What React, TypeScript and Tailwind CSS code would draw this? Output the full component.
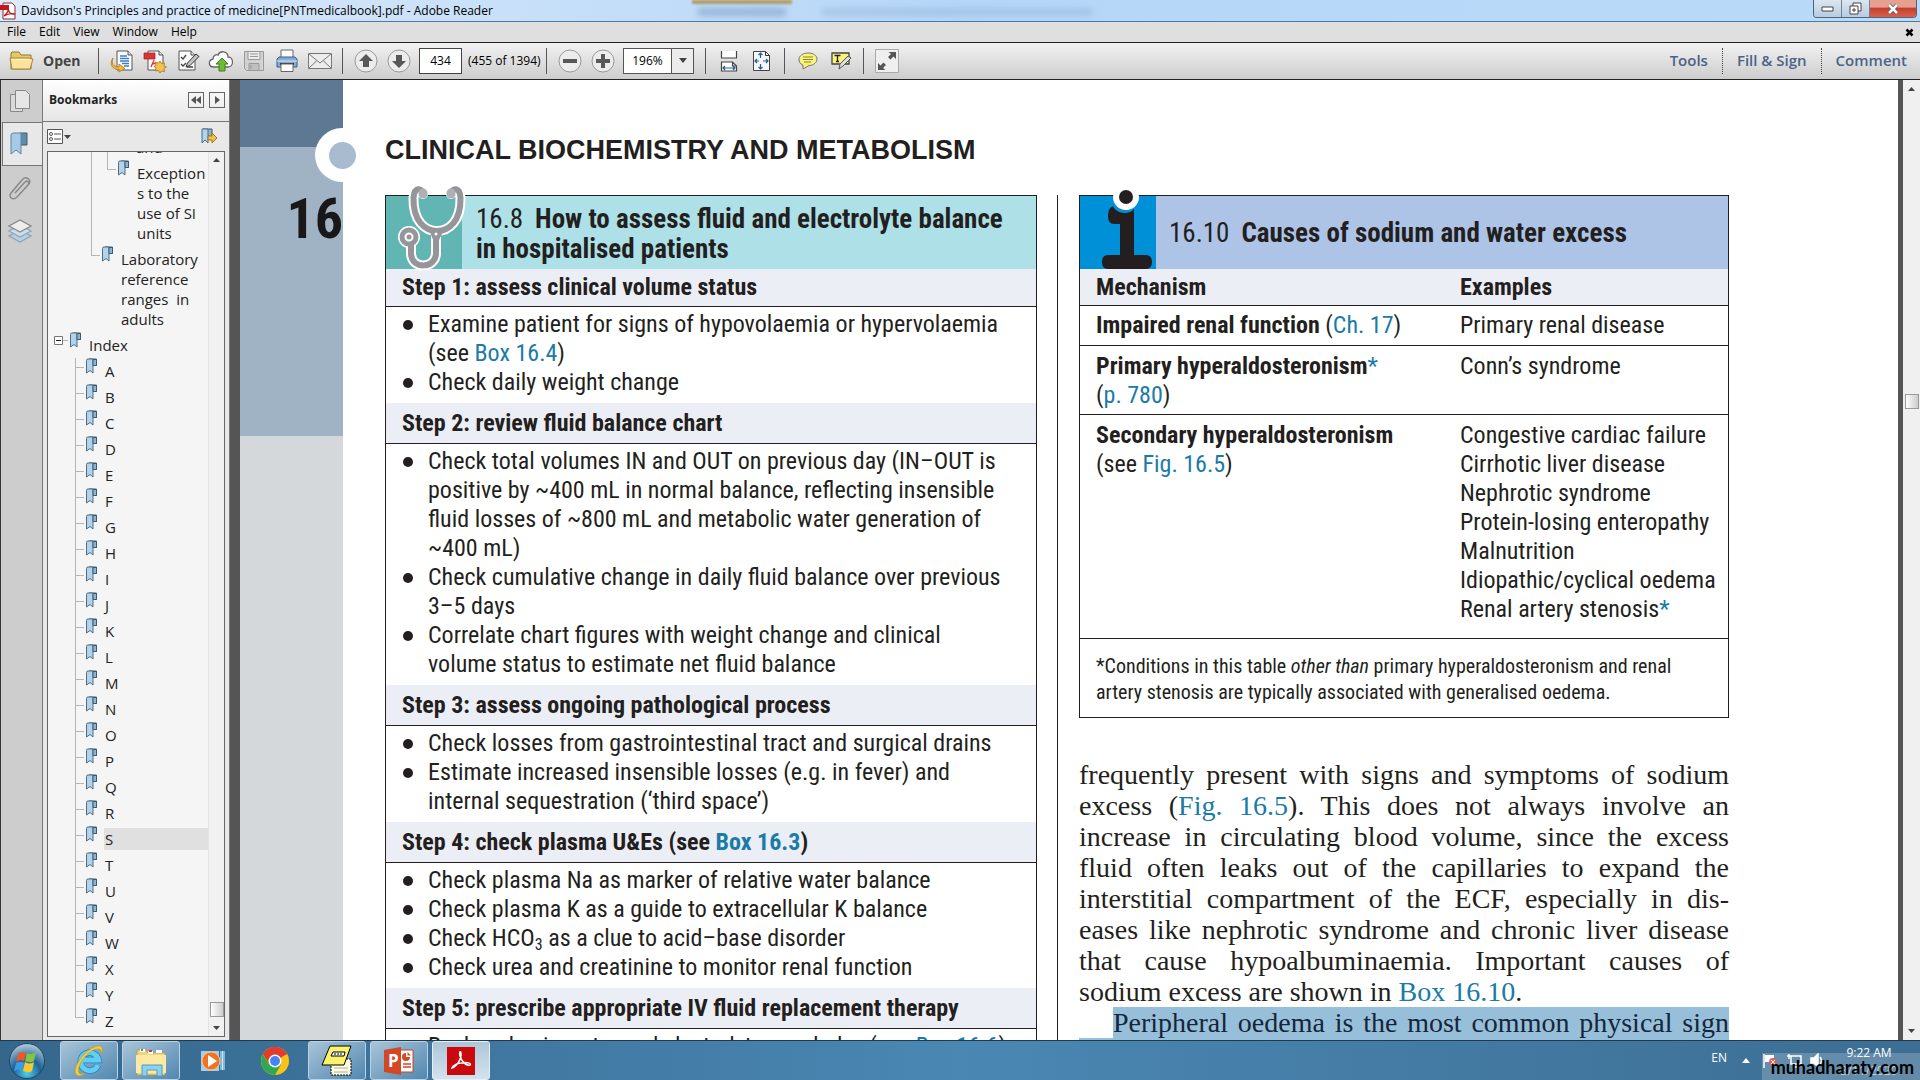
import React from 'react';

const linkClass = 'text-[#1a7ba6]';

interface Step {
  title: React.ReactNode;
  items: React.ReactNode[];
}

const steps: Step[] = [
  {
    title: 'Step 1: assess clinical volume status',
    items: [
      <>Examine patient for signs of hypovolaemia or hypervolaemia<br />(see <a href="#box-16-4" className={linkClass}>Box 16.4</a>)</>,
      'Check daily weight change',
    ],
  },
  {
    title: 'Step 2: review fluid balance chart',
    items: [
      <>Check total volumes IN and OUT on previous day (IN–OUT is<br />positive by ~400 mL in normal balance, reflecting insensible<br />fluid losses of ~800 mL and metabolic water generation of<br />~400 mL)</>,
      <>Check cumulative change in daily fluid balance over previous<br />3–5 days</>,
      <>Correlate chart figures with weight change and clinical<br />volume status to estimate net fluid balance</>,
    ],
  },
  {
    title: 'Step 3: assess ongoing pathological process',
    items: [
      'Check losses from gastrointestinal tract and surgical drains',
      <>Estimate increased insensible losses (e.g. in fever) and<br />internal sequestration (‘third space’)</>,
    ],
  },
  {
    title: <>Step 4: check plasma U&amp;Es (see <a href="#box-16-3" className={linkClass}>Box 16.3</a>)</>,
    items: [
      'Check plasma Na as marker of relative water balance',
      'Check plasma K as a guide to extracellular K balance',
      <>Check HCO<sub className="text-[16px]">3</sub> as a clue to acid–base disorder</>,
      'Check urea and creatinine to monitor renal function',
    ],
  },
  {
    title: 'Step 5: prescribe appropriate IV fluid replacement therapy',
    items: [<>Replace basic water and electrolytes each day (see <a href="#box-16-6" className={linkClass}>Box 16.6</a>)</>],
  },
];

const paragraph: React.ReactNode[] = [
  'frequently present with signs and symptoms of sodium',
  <>excess (<a href="#fig-16-5" className={linkClass}>Fig. 16.5</a>). This does not always involve an</>,
  'increase in circulating blood volume, since the excess',
  'fluid often leaks out of the capillaries to expand the',
  'interstitial compartment of the ECF, especially in dis-',
  'eases like nephrotic syndrome and chronic liver disease',
  'that cause hypoalbuminaemia. Important causes of',
];

const letters = 'ABCDEFGHIJKLMNOPQRSTUVWXYZ'.split('');

/* ---------- icons ---------- */

const BookmarkIcon = ({ size = 16 }: { size?: number }) => (
  <svg width={size} height={size} viewBox="0 0 16 16" className="shrink-0">
    <path d="M5 1h7.5v6.5H9z" fill="#6f95b0" stroke="#3b5b73" />
    <path d="M2.5 2.5Q2.5 1 4 1h5v14l-3-2.5L2.5 15z" fill="#b4d3ea" stroke="#4a6d87" />
    <path d="M9 1.500h3.500v6H9z" fill="#8fb4cf" stroke="#3b5b73" />
  </svg>
);

const FolderIcon = () => (
  <svg width="26" height="22" viewBox="0 0 26 22">
    <path d="M2 19V3l1-1h7l2 3h10v14z" fill="#e9c765" stroke="#8f7a3c" />
    <path d="M3 19L1 8h19l4 1-3 10z" fill="#fbe39c" stroke="#a3863a" />
    <path d="M3 9.500h17" stroke="#fff5cf" />
  </svg>
);

const PageArrowIcon = () => (
  <svg width="24" height="24" viewBox="0 0 24 24">
    <path d="M7 2h11l4 4v15H7z" fill="#fff" stroke="#555" />
    <path d="M18 2v4h4" fill="#ddd" stroke="#555" />
    <path d="M10 7h7M10 9.500h9M10 12h9M12 14.500h7M14 17h5" stroke="#3a80c4" strokeWidth="1.500" />
    <path d="M3 9c-2 5 0 9 6 9v-3l6 4.500L9 23v-2.500C2 20.500-1 15 3 9z" fill="#f3b83f" stroke="#a87518" strokeWidth=".8" />
  </svg>
);

const CreatePdfIcon = () => (
  <svg width="24" height="24" viewBox="0 0 24 24">
    <path d="M5 2h11l4 4v15H5z" fill="#f7f7f7" stroke="#555" />
    <path d="M16 2v4h4" fill="#ddd" stroke="#555" />
    <path d="M1 4h11v6H1z" fill="#d93438" stroke="#9c1c20" strokeWidth=".7" />
    <path d="M8 18c1-3 3-6 3-7M9 15l5-1" stroke="#d93438" strokeWidth="1.300" fill="none" />
    <path d="M17 12l1.500 2.500 3-.5-.5 3 2.500 1-2.500 1.500.5 3-3-.5L17 24l-1.500-2.500-3 .5.5-3-2-1.500 2-1-.5-3 3 .5z" fill="#f6c04c" stroke="#a87518" strokeWidth=".8" />
  </svg>
);

const EditPageIcon = () => (
  <svg width="24" height="24" viewBox="0 0 24 24">
    <path d="M3 2h12l4 4v15H3z" fill="#fafafa" stroke="#555" />
    <path d="M15 2v4h4" fill="#ddd" stroke="#555" />
    <path d="M5 8l2 2 3-4M5 15l2 2 3-3M11 18h6" stroke="#444" strokeWidth="1.300" fill="none" />
    <path d="M20 5l3 2.500-9 9-4 1.500 1.500-4z" fill="#c4c4c4" stroke="#333" />
  </svg>
);

const CloudIcon = () => (
  <svg width="26" height="24" viewBox="0 0 26 24">
    <path d="M6 18C0 18 0 11 5 10c0-4 4-5 5-4 2-5 10-4 10 2 6 0 6 10 0 10z" fill="#fff" stroke="#666" strokeWidth="1.300" />
    <path d="M14 9l6 6h-3v7h-6v-7H8z" fill="#6cbc36" stroke="#3c7f16" />
  </svg>
);

const SaveIcon = () => (
  <svg width="22" height="22" viewBox="0 0 22 22" fill="#d2d2d2" stroke="#999">
    <path d="M1.500 1.500h19v19h-17l-2-2z" />
    <path d="M5 1.500h12v8H5z" fill="#ececec" />
    <path d="M6 13.500h10v7H6z" fill="#c0c0c0" />
    <path d="M8 15v4M7 4h8M7 6.500h8" />
  </svg>
);

const PrintIcon = () => (
  <svg width="24" height="24" viewBox="0 0 24 24">
    <path d="M6 1h12v9H6z" fill="#fff" stroke="#666" />
    <path d="M2 10l2-2h16l2 2v8H2z" fill="#83abd6" stroke="#3e5d80" />
    <path d="M2 12h20" stroke="#dbe9f6" />
    <path d="M5 14h14v2H5z" fill="#333" />
    <path d="M6 15h12v7.500H6z" fill="#fff" stroke="#666" />
  </svg>
);

const MailIcon = () => (
  <svg width="26" height="20" viewBox="0 0 26 20" fill="none" stroke="#777">
    <path d="M1.500 2.500h23v15h-23z" fill="#ededed" />
    <path d="M2 3l11 9 11-9M2 17l8-7.500M24 17l-8-7.500" />
  </svg>
);

const RoundIcon = ({ d }: { d: string }) => (
  <svg width="24" height="24" viewBox="0 0 24 24">
    <circle cx="12" cy="12" r="11" fill="#ececec" stroke="#9a9a9a" />
    <path d={d} fill="#585858" />
  </svg>
);

const FitWidthIcon = () => (
  <svg width="20" height="22" viewBox="0 0 20 22" fill="none" stroke="#444" strokeWidth="1.200">
    <path d="M2.500 1v7h15V1" fill="#fff" />
    <path d="M2.500 21v-9h11l4 4v5z" fill="#fff" />
    <path d="M13.500 12v4h4" />
    <path d="M4 18h12M6 16l-2 2 2 2M14 16l2 2-2 2" stroke="#2c5b92" />
  </svg>
);

const FitPageIcon = () => (
  <svg width="20" height="22" viewBox="0 0 20 22" fill="none" stroke="#333">
    <path d="M1.500 1.500h12l4 4v15h-16z" fill="#f4f8fd" stroke="#444" />
    <path d="M13.500 1.500v4h4" />
    <path d="M8.500 3v5M8.500 19v-5M3 11h4M16 11h-5M6.500 5l2-2 2 2M6.500 17l2 2 2-2M5 9l-2 2 2 2M14 9l2 2-2 2" stroke="#2c5b92" strokeWidth="1.200" />
  </svg>
);

const CommentIcon = () => (
  <svg width="22" height="20" viewBox="0 0 22 20">
    <path d="M11 2c6 0 9 3 9 6s-3 6.500-8 6.500L6 18v-4c-3-1-4-3-4-6 0-3 4-6 9-6z" fill="#fbf27a" stroke="#777" />
    <path d="M6 6h10M6 8.500h10M7 11h7" stroke="#8d8534" />
  </svg>
);

const HighlightIcon = () => (
  <svg width="22" height="20" viewBox="0 0 22 20">
    <path d="M2 2h17v11H2z" fill="#fbf27a" stroke="#444" strokeWidth="1.300" />
    <path d="M4.500 4.500h6M7.500 4.500v6M6 10.500h3" stroke="#222" strokeWidth="1.300" />
    <path d="M18 5l3 2-8 8-4 3 1-5z" fill="#ddd" stroke="#555" />
  </svg>
);

const ExpandIcon = () => (
  <svg width="24" height="24" viewBox="0 0 24 24">
    <path d="M.5.5h23v23H.5z" fill="#efefef" stroke="#aaa" />
    <path d="M21 3v7l-2.500-2.500-3 3-2.500-2.500 3-3L13.500 3zM3 21v-7l2.500 2.500 3-3L11 16l-3 3 2.500 2z" fill="#555" />
  </svg>
);

const Stethoscope = () => (
  <svg width="80" height="90" viewBox="0 -2 80 90" className="absolute bottom-[-2px] left-0" fill="none" strokeLinecap="round">
    <g stroke="#fff" strokeWidth="10">
      <path d="M37 11C36 4 28 4 27.500 15C27 38 39 48 51 48C63 48 75 38 74.500 15C74 4 66 4 65 11" />
      <path d="M50 53v17c0 16-25 17-25 0V62" />
    </g>
    <circle cx="23" cy="54" r="11" fill="#fff" />
    <g stroke="#95959a" strokeWidth="6">
      <path d="M37 11C36 4 28 4 27.500 15C27 38 39 48 51 48C63 48 75 38 74.500 15C74 4 66 4 65 11" />
      <path d="M50 53v17c0 16-25 17-25 0V62" />
    </g>
    <path d="M37 10v1M65 10v1" stroke="#b0afb3" strokeWidth="9" />
    <circle cx="23" cy="54" r="7" fill="#fff" stroke="#95959a" strokeWidth="5" />
    <circle cx="23" cy="54" r="2.500" fill="#95959a" />
    <path d="M43 47h15l-6 12h-4z" fill="#95959a" />
    <circle cx="50" cy="51" r="1.500" fill="#fff" />
  </svg>
);

const InfoFigure = () => (
  <svg width="77" height="80" viewBox="0 0 77 80" className="absolute bottom-0 left-0">
    <circle cx="46" cy="8" r="13" fill="#fff" />
    <circle cx="46" cy="8" r="7" fill="#231f20" />
    <path d="M33 17c2 7 16 10 21 3v46h12q6 0 6 7t-6 7H28q-6 0-6-7t6-7h12V35h-6q-6 0-6-8t5-10z" fill="#231f20" />
  </svg>
);

/* ---------- window chrome ---------- */

const TitleBar = () => (
  <header className="flex h-[22px] shrink-0 justify-between border-b border-[#54789f] bg-gradient-to-r from-[#dcebfb] via-[#b6d6f8] to-[#badaf9]">
    <div className="flex w-[692px] shrink-0 items-center gap-[5px]">
      <svg width="16" height="18" viewBox="0 0 16 18">
        <path d="M3 1h9l3 3v13H3z" fill="#fff" stroke="#8b2a2a" />
        <path d="M0 3h9v5H0z" fill="#c4161c" />
        <path d="M4 14c4-3 5-7 4-8 0 4 3 7 7 6-4-1-8 0-11 2z" fill="none" stroke="#c4161c" strokeWidth="1.300" />
      </svg>
      <h1 className="text-[12px] leading-5 text-black">Davidson's Principles and practice of medicine[PNTmedicalbook].pdf - Adobe Reader</h1>
    </div>
    {/* glass bleed-through of the window behind */}
    <div className="flex grow gap-[30px]">
      <div className="flex w-[100px] flex-col gap-[4px]">
        <div className="h-[4px] bg-[#b39d64] blur-[1px]" />
        <div className="mx-[6px] h-[8px] bg-[#5b7ea5]/40 blur-[3px]" />
      </div>
      <div className="mt-[9px] h-[6px] w-[270px] bg-[#5b7ea5]/25 blur-[3px]" />
    </div>
    <div className="mr-[3px] flex h-[18px] overflow-hidden rounded-b border border-t-0 border-[#4f6577]">
      <button aria-label="Minimize" className="flex w-7 items-center justify-center border-r border-[#6e8397] bg-gradient-to-b from-[#dce6f1] to-[#b7cbe0]">
        <svg width="13" height="6"><path d="M1 1h11v4H1z" fill="#fff" stroke="#444" /></svg>
      </button>
      <button aria-label="Restore" className="flex w-7 items-center justify-center border-r border-[#6e8397] bg-gradient-to-b from-[#dce6f1] to-[#b7cbe0]">
        <svg width="13" height="13" fill="#fff" stroke="#444"><path d="M4 1h8v8H4z" /><path d="M1 4h8v8H1z" /><path d="M4 7h2v2H4z" /></svg>
      </button>
      <button aria-label="Close" className="flex w-[46px] items-center justify-center bg-gradient-to-b from-[#e5a090] from-40% via-[#c5402d] via-50% to-[#d9604a]">
        <svg width="14" height="12" viewBox="0 0 14 12"><path d="M3 2l8 8M11 2l-8 8" stroke="#555" strokeWidth="4" /><path d="M3 2l8 8M11 2l-8 8" stroke="#fff" strokeWidth="2.500" /></svg>
      </button>
    </div>
  </header>
);

const MenuBar = () => (
  <nav className="flex h-5 shrink-0 items-center justify-between bg-[#dfdfdf] pl-[7px] pr-[6px] text-[12px] leading-5 text-black">
    <div className="flex gap-[13px]">
      {['File', 'Edit', 'View', 'Window', 'Help'].map((m) => (
        <button key={m}>{m}</button>
      ))}
    </div>
    <button aria-label="Close document">
      <svg width="9" height="9"><path d="M1.500 1.500l6 6M7.500 1.500l-6 6" stroke="#000" strokeWidth="2.500" /></svg>
    </button>
  </nav>
);

const Sep = () => <div className="mx-[6px] h-[26px] w-px shrink-0 bg-[#555]" />;

const Tool = ({ label, children }: { label: string; children: React.ReactNode }) => (
  <button aria-label={label} className="flex h-7 w-[33px] shrink-0 items-center justify-center">
    {children}
  </button>
);

const Toolbar = () => (
  <div className="flex h-[38px] shrink-0 items-center border-y border-[#222] bg-gradient-to-b from-[#f2f2f2] to-[#cdcdcd] pb-px text-[#333]">
    <button className="flex w-[92px] shrink-0 items-center gap-2 pl-[9px] text-[14px] font-bold text-[#444]">
      <FolderIcon />
      Open
    </button>
    <Sep />
    <Tool label="Export"><PageArrowIcon /></Tool>
    <Tool label="Create PDF"><CreatePdfIcon /></Tool>
    <Tool label="Edit"><EditPageIcon /></Tool>
    <Tool label="Upload"><CloudIcon /></Tool>
    <Tool label="Save"><SaveIcon /></Tool>
    <Tool label="Print"><PrintIcon /></Tool>
    <Tool label="Email"><MailIcon /></Tool>
    <Sep />
    <Tool label="Previous page"><RoundIcon d="M12 5l7 7h-4v6H9v-6H5z" /></Tool>
    <Tool label="Next page"><RoundIcon d="M12 19l7-7h-4V6H9v6H5z" /></Tool>
    <input aria-label="Page number" defaultValue="434" className="ml-[4px] h-[26px] w-[43px] shrink-0 border border-[#444] bg-white text-center text-[12px] text-black" />
    <span className="w-[78px] shrink-0 whitespace-nowrap pl-[6px] text-[12px] text-black">(455 of 1394)</span>
    <Sep />
    <Tool label="Zoom out"><RoundIcon d="M5 10h14v4H5z" /></Tool>
    <Tool label="Zoom in"><RoundIcon d="M10 5h4v5h5v4h-5v5h-4v-5H5v-4h5z" /></Tool>
    <div className="ml-[4px] mr-[5px] flex h-[26px] w-[71px] shrink-0 border border-[#555] bg-white">
      <input aria-label="Zoom" defaultValue="196%" className="w-[48px] border-r border-[#555] text-center text-[12px] text-black" />
      <button aria-label="Zoom levels" className="flex grow items-center justify-center bg-[#ececec]">
        <svg width="8" height="5"><path d="M0 0h8L4 5z" fill="#444" /></svg>
      </button>
    </div>
    <Sep />
    <Tool label="Fit width"><FitWidthIcon /></Tool>
    <Tool label="Fit page"><FitPageIcon /></Tool>
    <Sep />
    <Tool label="Comment bubble"><CommentIcon /></Tool>
    <Tool label="Highlight"><HighlightIcon /></Tool>
    <Sep />
    <Tool label="Full screen"><ExpandIcon /></Tool>
    <div className="ml-auto flex h-[26px] items-center text-[15px] font-semibold text-[#4b6389]">
      <button className="px-[14px]">Tools</button>
      <button className="h-full border-x border-dotted border-[#444] px-[14px]">Fill &amp; Sign</button>
      <button className="pl-[14px] pr-[13px]">Comment</button>
    </div>
  </div>
);

/* ---------- bookmarks ---------- */

// connector between a tree row and its parent
const Guide = ({ last = false }: { last?: boolean }) => (
  <div className={last ? 'h-[10px] w-[9px] shrink-0 border-b border-l border-[#b5b5b5]' : 'w-[9px] shrink-0 border-l border-[#b5b5b5]'}>
    {!last && <div className="h-[10px] border-b border-[#b5b5b5]" />}
  </div>
);

const Bookmarks = () => (
  <aside className="flex w-[188px] shrink-0 flex-col border-x border-[#777] bg-[#e8e8e8]">
    <div className="flex h-[42px] shrink-0 items-center justify-between border-b border-[#777] bg-gradient-to-b from-white to-[#e6e6e6] pb-px pl-[6px] pr-[4px]">
      <h2 className="text-[12px] font-bold text-[#222]">Bookmarks</h2>
      <div className="flex gap-[5px]">
        <button aria-label="Collapse panel" className="flex size-4 items-center justify-center border border-[#666]">
          <svg width="10" height="8"><path d="M5 0v8L0 4zM10 0v8L5 4z" fill="#555" /></svg>
        </button>
        <button aria-label="Panel options" className="flex size-4 items-center justify-center border border-[#666]">
          <svg width="5" height="8"><path d="M0 0v8l5-4z" fill="#555" /></svg>
        </button>
      </div>
    </div>
    <div className="flex h-[29px] shrink-0 items-center justify-between pb-px pl-[4px] pr-[11px]">
      <button aria-label="Bookmark options">
        <svg width="24" height="15" fill="none" stroke="#555"><path d="M.5.5h15v14H.5z" fill="#fff" /><circle cx="4" cy="5" r="1.500" /><circle cx="4" cy="10" r="1.500" /><path d="M7 5h7M7 10h7" /><path d="M17 6h7l-3.500 4z" fill="#444" stroke="none" /></svg>
      </button>
      <button aria-label="Find current bookmark" className="flex">
        <svg width="18" height="17" viewBox="0 0 18 17"><path d="M3 1h9v9l-6-4z" fill="#8fb4cf" stroke="#3b5b73" /><path d="M2 1h6v14l-3-3-3 3z" fill="#b4d3ea" stroke="#4a6d87" /><path d="M8 8h4V5l5 5-5 5v-3H8z" fill="#f3c046" stroke="#a87518" /></svg>
      </button>
    </div>
    <div className="mx-[4px] mb-[3px] flex min-h-0 grow border border-[#666] bg-[#f5f5f5]">
      <ul className="flex min-h-0 grow flex-col justify-end overflow-hidden pb-[2px] text-[15px] leading-5 text-[#222]">
        <li className="flex h-[26px] shrink-0 pl-[43px]">
          <div className="w-4 shrink-0 border-l border-[#b5b5b5]" />
          <div className="w-[29px] shrink-0 border-l border-[#b5b5b5]" />
          <span className="py-[3px]">and</span>
        </li>
        <li className="flex shrink-0 pl-[43px]">
          <div className="w-4 shrink-0 border-l border-[#b5b5b5]" />
          <Guide last />
          <BookmarkIcon />
          <a href="#exceptions" className="py-[3px] pl-[5px]">Exception<br />s to the<br />use of SI<br />units</a>
        </li>
        <li className="flex shrink-0 pl-[43px]">
          <Guide last />
          <BookmarkIcon />
          <a href="#laboratory" className="whitespace-pre py-[3px] pl-[5px]">Laboratory<br />reference<br />ranges  in<br />adults</a>
        </li>
        <li className="flex shrink-0 pl-[6px]">
          <button aria-label="Collapse Index" className="mt-[4px] flex h-[9px] w-[14px] items-center">
            <svg width="14" height="9" fill="none"><path d="M.5.5h8v8h-8z" fill="#fff" stroke="#777" /><path d="M2 4.500h5" stroke="#222" /><path d="M9 4.500h5" stroke="#b5b5b5" /></svg>
          </button>
          <BookmarkIcon />
          <a href="#index" className="py-[3px] pl-[5px]">Index</a>
        </li>
        {letters.map((l) => (
          <li key={l} className="flex h-[26px] shrink-0 pl-[27px]">
            <Guide last={l === 'Z'} />
            <BookmarkIcon />
            <a href="#index" className={l === 'S' ? 'my-[2px] ml-[4px] grow bg-[#e0e0e0] py-px pl-px' : 'py-[3px] pl-[5px]'}>{l}</a>
          </li>
        ))}
      </ul>
      <div className="flex w-4 shrink-0 flex-col items-center border-l border-[#e4e4e4] bg-[#f1f1f1] pb-[6px] pt-[6px]">
        <svg width="7" height="4"><path d="M0 4h7L3.500 0z" fill="#444" /></svg>
        <div className="mb-[9px] mt-auto h-[15px] w-[14px] border border-[#999] bg-gradient-to-r from-white to-[#ccc]" />
        <svg width="7" height="4"><path d="M0 0h7L3.500 4z" fill="#444" /></svg>
      </div>
    </div>
  </aside>
);

const SideStrip = () => (
  <div className="flex w-[42px] shrink-0 flex-col border-l border-[#333] bg-[#cdcdcd]">
    <button aria-label="Page thumbnails" className="flex h-[42px] items-center justify-center pr-[4px]">
      <svg width="22" height="24" fill="#dadada" stroke="#888"><path d="M1.500 5.500h12v17h-12z" /><path d="M6.500 1.500h10l4 4v14h-14z" fill="#e6e6e6" /></svg>
    </button>
    <button aria-label="Bookmarks" className="ml-px flex h-[44px] items-center justify-center border-y border-l border-[#777] bg-[#e8e8e8] pr-[8px]">
      <svg width="20" height="26" viewBox="0 0 20 26"><path d="M11 2h7v12h-7z" fill="#5f8cab" stroke="#3b5b73" /><path d="M2 4q0-2 3-2h7v21l-5-4-5 4z" fill="#a6cae6" stroke="#5c86a3" /></svg>
    </button>
    <button aria-label="Attachments" className="flex h-[43px] items-center justify-center pr-[4px]">
      <svg width="24" height="26" fill="none" stroke="#888" strokeWidth="1.500"><path d="M7 18L17 7c2-2 5 0 3 3L9 22c-4 4-9 0-6-4L14 5c4-5 10 0 7 4" /></svg>
    </button>
    <button aria-label="Layers" className="flex h-[43px] items-center justify-center pr-[4px]">
      <svg width="26" height="26" strokeWidth="1.300"><path d="M2 18l11 6 11-6-11-6z" fill="#b9cfdf" stroke="#8ba6ba" /><path d="M2 13l11 6 11-6-11-6z" fill="#cfdde8" stroke="#8ba6ba" /><path d="M2 8l11 6 11-6-11-6z" fill="#ededed" stroke="#888" /></svg>
    </button>
  </div>
);

/* ---------- document ---------- */

const StepsBox = () => (
  <section className="min-w-0 flex-1 border-x border-[#231f20]">
    <div className="flex h-[74px] border-t border-[#231f20] bg-[#ade0e7]">
      <div className="relative w-[76px] shrink-0 bg-[#61b5b3]"><Stethoscope /></div>
      <h3 className="whitespace-nowrap pl-[14px] pt-[8px] text-[27px] font-bold leading-[30px]">
        <span className="mr-3 font-normal">16.8</span>How to assess fluid and electrolyte balance<br />in hospitalised patients
      </h3>
    </div>
    {steps.map((step, i) => (
      <div key={i}>
        <h4 className={`whitespace-nowrap border-b border-[#231f20] bg-[#eceef6] pl-4 font-bold ${i === 0 ? 'py-1' : 'py-[5px] leading-[30px]'}`}>{step.title}</h4>
        <ul className="pb-[6px] pt-[3px]">
          {step.items.map((item, j) => (
            <li key={j} className="flex whitespace-nowrap pl-[17px]">
              <span className="mr-[15px] mt-[10px] size-[10px] shrink-0 rounded-full bg-[#231f20]" />
              <span>{item}</span>
            </li>
          ))}
        </ul>
      </div>
    ))}
  </section>
);

const CausesBox = () => (
  <section className="border-x border-b border-[#231f20]">
    <div className="flex h-[74px] items-center border-t border-[#231f20] bg-[#adc4e7]">
      <div className="relative h-full w-[76px] shrink-0 bg-[#0090d8]"><InfoFigure /></div>
      <h3 className="whitespace-nowrap pl-[13px] pt-px text-[27px] font-bold leading-[30px]">
        <span className="mr-3 font-normal">16.10</span>Causes of sodium and water excess
      </h3>
    </div>
    <table className="w-full table-fixed whitespace-nowrap text-left align-top">
      <thead>
        <tr className="border-b border-[#231f20] bg-[#eceef6]">
          <th className="w-[380px] pb-[3px] pl-4 pt-[4px]">Mechanism</th>
          <th className="pb-[3px] pt-[4px]">Examples</th>
        </tr>
      </thead>
      <tbody className="align-top">
        <tr className="border-b border-[#231f20]">
          <td className="py-[5px] pl-4"><b>Impaired renal function</b> (<a href="#ch-17" className={linkClass}>Ch. 17</a>)</td>
          <td className="py-[5px]">Primary renal disease</td>
        </tr>
        <tr className="border-b border-[#231f20]">
          <td className="pb-[4px] pl-4 pt-[6px]"><b>Primary hyperaldosteronism</b><span className={linkClass}>*</span><br />(<a href="#p-780" className={linkClass}>p. 780</a>)</td>
          <td className="pb-[4px] pt-[6px]">Conn’s syndrome</td>
        </tr>
        <tr className="border-b border-[#231f20]">
          <td className="pb-[14px] pl-4 pt-[6px]"><b>Secondary hyperaldosteronism</b><br />(see <a href="#fig-16-5" className={linkClass}>Fig. 16.5</a>)</td>
          <td className="pb-[14px] pt-[6px]">
            Congestive cardiac failure<br />Cirrhotic liver disease<br />Nephrotic syndrome<br />Protein-losing enteropathy<br />Malnutrition<br />Idiopathic/cyclical oedema<br />Renal artery stenosis<span className={linkClass}>*</span>
          </td>
        </tr>
      </tbody>
    </table>
    <p className="whitespace-nowrap pb-3 pl-4 pt-[14px] text-[20px] leading-[26px]">
      *Conditions in this table <i>other than</i> primary hyperaldosteronism and renal<br />artery stenosis are typically associated with generalised oedema.
    </p>
  </section>
);

const Page = () => (
  <main className="flex min-w-0 grow overflow-hidden bg-white">
    <div className="relative flex w-[103px] shrink-0 flex-col bg-[#d4d8db]">
      <div className="h-[67px] bg-[#5e7792]" />
      <div className="h-[289px] bg-[#a0b3c4] pt-[38px] text-right font-['Roboto_Condensed','Liberation_Sans',sans-serif] text-[56px] font-bold leading-[68px] text-[#1a1718]">16</div>
      <div className="absolute right-[-26px] top-[48px] flex size-[54px] items-center justify-center rounded-full bg-white">
        <div className="size-[27px] rounded-full bg-[#a9bccf]" />
      </div>
    </div>
    <div className="min-w-0 grow pl-[42px] pr-[169px] pt-[54px] text-[#231f20]">
      <h2 className="whitespace-nowrap font-['Liberation_Sans',Arial,sans-serif] text-[27px] font-bold leading-8">CLINICAL BIOCHEMISTRY AND METABOLISM</h2>
      <div className="mt-[29px] flex font-['Roboto_Condensed','Liberation_Sans',sans-serif] text-[24px] leading-[29px]">
        <StepsBox />
        <div className="ml-5 mr-[21px] w-px bg-[#231f20]" />
        <div className="min-w-0 flex-1">
          <CausesBox />
          <div className="mt-[41px] whitespace-nowrap font-['Liberation_Serif',serif] text-[28px] leading-[31px]">
            {paragraph.map((line, i) => (
              <p key={i} className="[text-align-last:justify]">{line}</p>
            ))}
            <p>sodium excess are shown in <a href="#box-16-10" className={linkClass}>Box 16.10</a>.</p>
            <p className="ml-[34px] bg-[#98bfd9] text-[#14263a] [text-align-last:justify]">Peripheral oedema is the most common physical sign</p>
            <p className="bg-[#98bfd9] text-[#14263a]">of sodium excess</p>
          </div>
        </div>
      </div>
    </div>
  </main>
);

const Scrollbar = () => (
  <div className="flex w-[17px] shrink-0 flex-col items-center bg-[#f0f0f0] py-[7px]">
    <svg width="7" height="4"><path d="M0 4h7L3.500 0z" fill="#444" /></svg>
    <div className="mt-[303px] h-[15px] w-[14px] border border-[#999] bg-gradient-to-r from-white to-[#ccc]" />
    <svg width="7" height="4" className="mt-auto"><path d="M0 0h7L3.500 4z" fill="#444" /></svg>
  </div>
);

/* ---------- taskbar ---------- */

const TaskButton = ({ label, state = 'open', children }: { label: string; state?: 'open' | 'active' | 'pinned'; children: React.ReactNode }) => {
  const frames = {
    open: 'border-[#b9d3e6] bg-gradient-to-br from-[#a9c4d8] to-[#5088b0]',
    active: 'border-[#e6f0f7] bg-gradient-to-b from-[#aec6d8] to-[#d3e2ee]',
    pinned: 'border-transparent',
  };
  return (
    <button aria-label={label} className={`flex w-[58px] items-center justify-center rounded-[3px] border ${frames[state]}`}>
      {children}
    </button>
  );
};

const Taskbar = () => (
  <footer className="flex h-10 shrink-0 border-t border-[#1d3a50] bg-gradient-to-r from-[#35678c] via-[#4a87b3] to-[#3d6e93]">
    <button aria-label="Start" className="flex w-[60px] items-center pl-[8px]">
      <svg width="38" height="38" viewBox="0 0 38 38">
        <defs>
          <radialGradient id="orb" cx=".5" cy=".85" r=".8">
            <stop offset="0" stopColor="#4fd0ee" />
            <stop offset=".5" stopColor="#1b6397" />
            <stop offset="1" stopColor="#a8c2d6" />
          </radialGradient>
        </defs>
        <circle cx="19" cy="19" r="17.500" fill="url(#orb)" stroke="#23465f" />
        <path d="M10 12c3-3 6-2 8-1l-2 8c-3-1-5-1-8 1z" fill="#e9592a" />
        <path d="M19 11c3 2 6 1 9-1l-2 9c-3 2-6 1-9 0z" fill="#86c440" />
        <path d="M8 21c3-2 6-1 8 0l-2 8c-3-2-5-1-8 0z" fill="#3d9be0" />
        <path d="M17 20c3 2 6 2 9 0l-2 9c-3 2-6 1-9 0z" fill="#fbc82c" />
      </svg>
    </button>
    <div className="flex gap-[4px]">
      <TaskButton label="Internet Explorer">
        <svg width="34" height="34" viewBox="0 0 34 34" fill="none">
          <path d="M26 21a9 9 0 1 1 .5-5H11" stroke="#1f83c0" strokeWidth="6.500" />
          <path d="M26 21a9 9 0 1 1 .5-5H11" stroke="#63cdf6" strokeWidth="5" />
          <path d="M5 31c-7-4 8-28 22-29 4 0 4 5 2 9 1-4 0-6-3-6C16 5 4 22 7 29c1 2 5 1 7 0-3 2-6 4-9 2z" fill="#f6cf36" stroke="#c89a16" strokeWidth=".6" />
        </svg>
      </TaskButton>
      <TaskButton label="Windows Explorer">
        <svg width="34" height="32" viewBox="0 0 34 32">
          <path d="M3 5h9l2 3h17v22H3z" fill="#f0d375" stroke="#b99a45" strokeWidth=".7" />
          <path d="M6 4h5v3H6zM14 6h5v3h-5zM22 5h6v3h-6z" fill="#fff" />
          <path d="M7 4h2v2H7z" fill="#3ca33c" /><path d="M15 5h3v2h-3z" fill="#d33" />
          <path d="M2 10h30v18H2z" fill="#fbe9a4" />
          <path d="M8 31V20h20v11h-5v-6H13v6z" fill="#8fd0ee" stroke="#4d9cc8" />
        </svg>
      </TaskButton>
      <TaskButton label="Media Player" state="pinned">
        <svg width="26" height="26" viewBox="0 0 26 26">
          <path d="M20 3h5v19h-5z" fill="#7db7dc" /><path d="M22.500 3v19" stroke="#cfe6f4" />
          <path d="M1 3h18v20H1z" fill="#a9cde6" />
          <circle cx="11" cy="13" r="9" fill="#ee7421" stroke="#f7c39b" />
          <path d="M8 7l9 6-9 6z" fill="#fff" />
        </svg>
      </TaskButton>
      <TaskButton label="Chrome" state="pinned">
        <svg width="30" height="30" viewBox="0 0 30 30">
          <circle cx="15" cy="15" r="14" fill="#fbc116" />
          <path d="M15 15L2.900 8A14 14 0 0 1 27.100 8z" fill="#e33b2e" />
          <path d="M15 8h12.100A14 14 0 0 0 2.900 8L9 18z" fill="#e33b2e" />
          <path d="M2.900 8A14 14 0 0 0 15 29l6-10.500-12 0z" fill="#2da94f" />
          <circle cx="15" cy="15" r="6.500" fill="#fff" />
          <circle cx="15" cy="15" r="5" fill="#4285f4" />
        </svg>
      </TaskButton>
      <TaskButton label="Notes">
        <svg width="32" height="32" viewBox="0 0 32 32" stroke="#000">
          <path d="M10 14h20v16H10z" fill="#fffde0" strokeDasharray="2 1" />
          <path d="M13 23h14M13 27h14" stroke="#aaa" />
          <path d="M9 1h21l-7 19H1z" fill="#f8f36a" />
          <path d="M12 7h12l-1 4H10z" fill="#fff" />
          <path d="M13 9h8" strokeDasharray="2 1" />
        </svg>
      </TaskButton>
      <TaskButton label="PowerPoint">
        <svg width="32" height="32" viewBox="0 0 32 32">
          <path d="M16 5h14v22H16z" fill="#fff" stroke="#c9411f" />
          <path d="M23 8a4 4 0 1 0 4 4h-4z" fill="#d24726" /><path d="M24.500 7v3.500H28z" fill="#d24726" />
          <path d="M20 19h8M20 22h8" stroke="#d24726" strokeWidth="1.500" />
          <path d="M1 5l17-3v28L1 27z" fill="#d24726" />
          <text x="5" y="22" fontSize="17" fontWeight="bold" fill="#fff" fontFamily="Open Sans, sans-serif">P</text>
        </svg>
      </TaskButton>
      <TaskButton label="Adobe Reader" state="active">
        <svg width="28" height="28" viewBox="0 0 28 28" fill="none">
          <path d="M0 0h28v28H0z" fill="#c80a0e" />
          <path d="M5 21c4-1 10-9 9-15-1-3-2 0-1 3 2 6 6 10 10 9 2-2-4-3-8-2-4 0-9 2-10 5z" stroke="#fff" strokeWidth="1.500" />
        </svg>
      </TaskButton>
    </div>
    <div className="relative ml-auto flex items-start text-[12px] text-white">
      <span className="pr-[15px] pt-[9px] leading-4">EN</span>
      <svg width="8" height="5" className="mr-[12px] mt-[17px]"><path d="M0 5h8L4 0z" fill="#fff" /></svg>
      <div className="flex w-[66px] gap-[8px] pt-[12px]">
        <svg width="16" height="16"><path d="M2 1v14" stroke="#fff" strokeWidth="1.500" /><path d="M3 2h9v7H3z" fill="#fff" /><circle cx="11" cy="9" r="4" fill="#d33a34" /><path d="M9 7l4 4M13 7l-4 4" stroke="#fff" /></svg>
        <svg width="16" height="16" fill="none" stroke="#fff" strokeWidth="1.500"><path d="M5 3h10v8H5zM8 14h5M3 1v5M1 3h4" /></svg>
        <svg width="14" height="16" fill="none" stroke="#fff" strokeWidth="1.500"><path d="M1 5h3l4-4v13l-4-4H1z" fill="#fff" /><path d="M10 4q3 4 0 7" /></svg>
      </div>
      <div className="w-[92px] pr-[10px] pt-[3px] text-center leading-[18px]">
        <div>9:22 AM</div>
        <div className="text-white/60">3/11/2020</div>
      </div>
      <div className="absolute bottom-0 right-0 flex h-[27px] w-[158px] items-center justify-end bg-white/20 pr-[6px] font-[Lato,sans-serif] text-[18px] font-bold leading-[26px] text-black">
        muhadharaty.com
      </div>
    </div>
  </footer>
);

export default function App() {
  return (
    <div className="flex h-screen flex-col overflow-hidden bg-[#555] font-['Open_Sans','Segoe_UI',sans-serif]">
      <TitleBar />
      <MenuBar />
      <Toolbar />
      <div className="flex min-h-0 grow">
        <SideStrip />
        <Bookmarks />
        <div className="w-[10px] shrink-0 bg-[#555]" />
        <Page />
        <div className="w-[5px] shrink-0 bg-[#555]" />
        <Scrollbar />
      </div>
      <Taskbar />
    </div>
  );
}
